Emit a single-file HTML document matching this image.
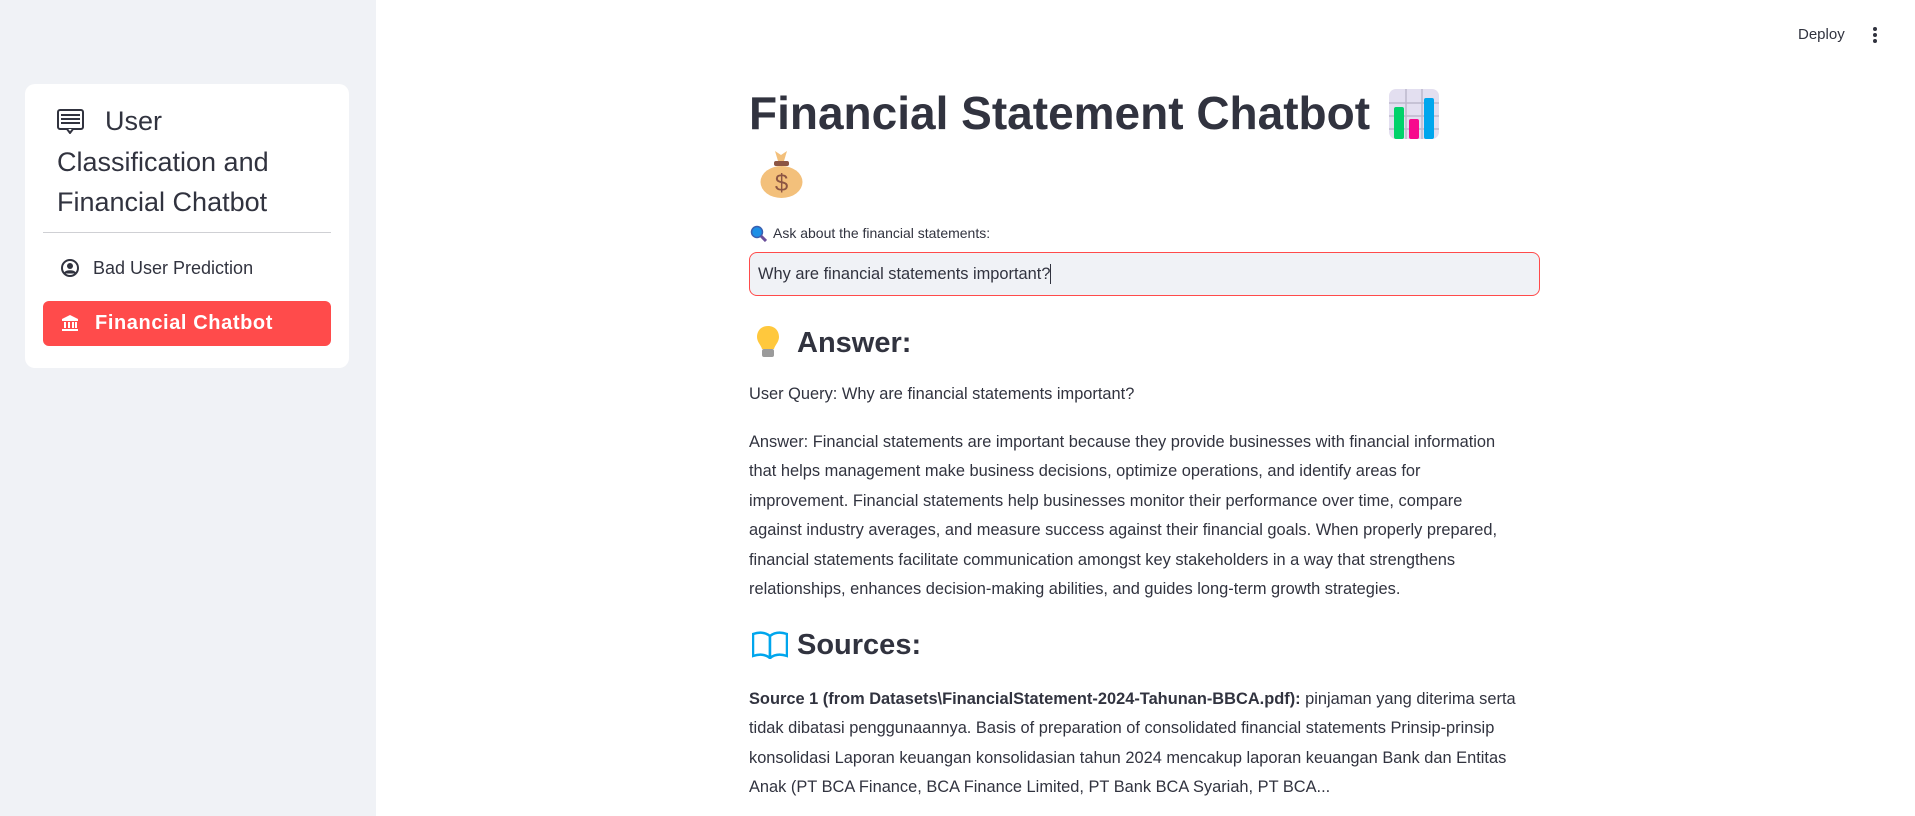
<!DOCTYPE html>
<html><head><meta charset="utf-8"><style>
*{margin:0;padding:0;box-sizing:border-box}
body{width:1915px;height:816px;background:#fff;font-family:"Liberation Sans",sans-serif;color:#31333f;position:relative;overflow:hidden}
.abs{position:absolute;white-space:nowrap}
#sb{position:absolute;left:0;top:0;width:376px;height:816px;background:#f0f2f6}
.card{position:absolute;left:25px;top:84px;width:324px;height:284px;background:#fff;border-radius:10px}
.p{font-size:16.4px;line-height:20px}
</style></head><body>
<div id="sb"></div>
<div class="card"></div>
<svg class="abs" style="left:57px;top:109px" width="27" height="25" viewBox="0 0 27 25"><rect x="1" y="1" width="25" height="19" rx="2" fill="#fff" stroke="#31333f" stroke-width="2"/><path d="M4 6h19M4 10h19M4 14h19" stroke="#31333f" stroke-width="2"/><path d="M10 20l3 4 3-4" fill="#fff" stroke="#31333f" stroke-width="2"/></svg>
<div class="abs" style="left:105px;top:106px;font-size:27px;line-height:30px">User</div>
<div class="abs" style="left:57px;top:147px;font-size:27px;line-height:30px">Classification and</div>
<div class="abs" style="left:57px;top:187px;font-size:27px;line-height:30px">Financial Chatbot</div>
<div class="abs" style="left:43px;top:232px;width:288px;height:1px;background:#cfd0d4"></div>
<svg class="abs" style="left:61px;top:259px" width="18" height="18" viewBox="0 0 18 18"><circle cx="9" cy="9" r="8" fill="none" stroke="#31333f" stroke-width="2"/><circle cx="9" cy="7" r="3" fill="#31333f"/><path d="M3.5 14.5c2-3 9-3 11 0" fill="#31333f" stroke="#31333f" stroke-width="2"/></svg>
<div class="abs" style="left:93px;top:257px;font-size:18px;line-height:22px">Bad User Prediction</div>
<div class="abs" style="left:43px;top:301px;width:288px;height:45px;background:#ff4b4b;border-radius:6px"></div>
<svg class="abs" style="left:61px;top:314px" width="18" height="18" viewBox="0 0 18 18" fill="#fff"><path d="M9 1L1 5v2h16V5z"/><rect x="3" y="8" width="2" height="6"/><rect x="7" y="8" width="2" height="6"/><rect x="11" y="8" width="2" height="6"/><rect x="14" y="8" width="2" height="6"/><rect x="1" y="15" width="16" height="2"/></svg>
<div class="abs" style="left:95px;top:312px;font-size:20px;line-height:23px;font-weight:bold;letter-spacing:0.6px;color:#fff">Financial Chatbot</div>

<div class="abs" style="left:1798px;top:26px;font-size:15px;line-height:18px">Deploy</div>
<svg class="abs" style="left:1872px;top:25px" width="6" height="20"><circle cx="3" cy="4" r="2" fill="#31333f"/><circle cx="3" cy="10" r="2" fill="#31333f"/><circle cx="3" cy="16" r="2" fill="#31333f"/></svg>

<div class="abs" style="left:749px;top:87px;font-size:46px;line-height:52px;font-weight:bold">Financial Statement Chatbot</div>
<svg class="abs" style="left:1389px;top:89px" width="50" height="50" viewBox="0 0 50 50"><rect width="50" height="50" rx="7" fill="#e3dff0"/><path d="M17 0v50M33 0v50M0 14h50M0 27h50M0 40h50" stroke="#bdb8cc" stroke-width="1.5"/><rect x="5" y="18" width="10" height="32" rx="2" fill="#00d26a"/><rect x="20" y="30" width="10" height="20" rx="2" fill="#f70a8d"/><rect x="35" y="9" width="10" height="41" rx="2" fill="#00a6ed"/></svg>
<svg class="abs" style="left:757px;top:149px" width="49" height="49" viewBox="0 0 49 49"><path d="M18 2l6 4 6-4-3 10h-6z" fill="#f3c07b"/><rect x="17" y="12" width="15" height="5" rx="2" fill="#8c5543"/><ellipse cx="24.5" cy="33" rx="21" ry="16" fill="#f3c07b"/><text x="24.5" y="42" text-anchor="middle" font-size="24" font-family="Liberation Sans" fill="#8c5543">$</text></svg>

<svg class="abs" style="left:750px;top:225px" width="17" height="17" viewBox="0 0 17 17"><circle cx="7" cy="7" r="5.5" fill="#1c8fe6" stroke="#3a5fb0" stroke-width="1.5"/><path d="M11 11l5 5" stroke="#6b4f9a" stroke-width="3"/></svg>
<div class="abs" style="left:773px;top:224px;font-size:14px;line-height:18px">Ask about the financial statements:</div>
<div class="abs" style="left:749px;top:252px;width:791px;height:44px;background:#f0f2f6;border:1px solid #ff4b4b;border-radius:8px"></div>
<div class="abs" style="left:758px;top:264px;font-size:16.4px;line-height:20px">Why are financial statements important?<span style="display:inline-block;width:1px;height:20px;background:#31333f;vertical-align:top"></span></div>

<svg class="abs" style="left:756px;top:325px" width="24" height="34" viewBox="0 0 24 34"><path d="M12 1C5 1 1 6 1 12c0 5 4 8 5 12h12c1-4 5-7 5-12C23 6 19 1 12 1z" fill="#ffc83d"/><rect x="6" y="24" width="12" height="8" rx="2" fill="#9b9b9b"/></svg>
<div class="abs" style="left:797px;top:326px;font-size:29px;line-height:34px;font-weight:bold">Answer:</div>
<div class="abs p" style="left:749px;top:384px">User Query: Why are financial statements important?</div>
<div class="abs p" style="left:749px;top:428px;line-height:29.4px">Answer: Financial statements are important because they provide businesses with financial information<br>that helps management make business decisions, optimize operations, and identify areas for<br>improvement. Financial statements help businesses monitor their performance over time, compare<br>against industry averages, and measure success against their financial goals. When properly prepared,<br>financial statements facilitate communication amongst key stakeholders in a way that strengthens<br>relationships, enhances decision-making abilities, and guides long-term growth strategies.</div>

<svg class="abs" style="left:752px;top:631px" width="36" height="28" viewBox="0 0 36 28"><path d="M1 3c6-2 12-2 17 2v22c-5-4-11-4-17-2z" fill="#fff" stroke="#00a6ed" stroke-width="2.5"/><path d="M35 3c-6-2-12-2-17 2v22c5-4 11-4 17-2z" fill="#fff" stroke="#00a6ed" stroke-width="2.5"/></svg>
<div class="abs" style="left:797px;top:628px;font-size:29px;line-height:34px;font-weight:bold">Sources:</div>
<div class="abs p" style="left:749px;top:685px;line-height:29.4px"><b>Source 1 (from Datasets\FinancialStatement-2024-Tahunan-BBCA.pdf):</b> pinjaman yang diterima serta<br>tidak dibatasi penggunaannya. Basis of preparation of consolidated financial statements Prinsip-prinsip<br>konsolidasi Laporan keuangan konsolidasian tahun 2024 mencakup laporan keuangan Bank dan Entitas<br>Anak (PT BCA Finance, BCA Finance Limited, PT Bank BCA Syariah, PT BCA...</div>
</body></html>
